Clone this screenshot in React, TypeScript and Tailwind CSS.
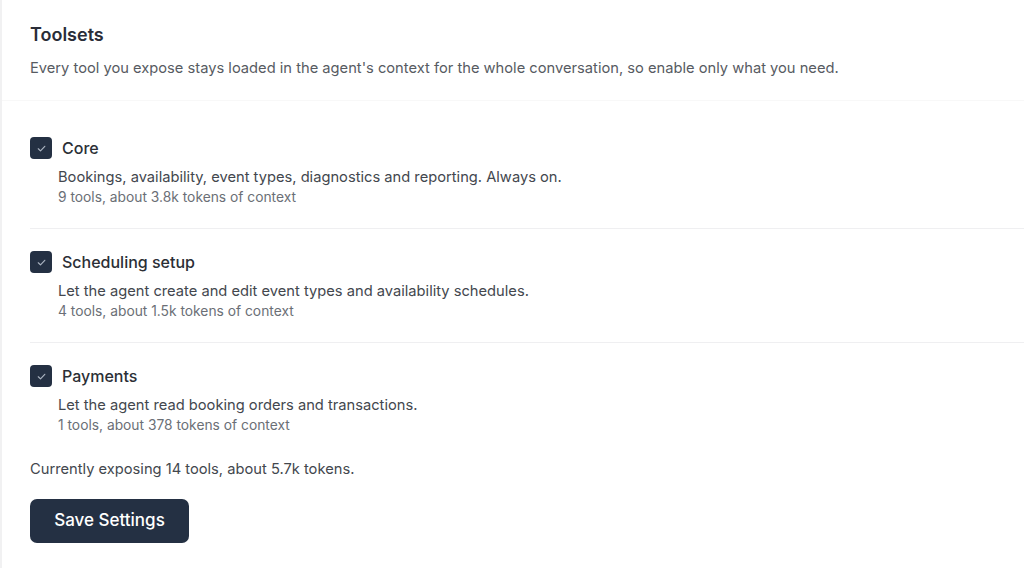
const toolsets = [
  {
    name: "Core",
    description:
      "Bookings, availability, event types, diagnostics and reporting. Always on.",
    meta: "9 tools, about 3.8k tokens of context",
  },
  {
    name: "Scheduling setup",
    description:
      "Let the agent create and edit event types and availability schedules.",
    meta: "4 tools, about 1.5k tokens of context",
  },
  {
    name: "Payments",
    description: "Let the agent read booking orders and transactions.",
    meta: "1 tools, about 378 tokens of context",
  },
];

function CheckBox() {
  return (
    <span className="flex h-[22px] w-[22px] shrink-0 items-center justify-center rounded-[4px] bg-[#243043]">
      <svg viewBox="0 0 12 12" className="h-[11px] w-[11px]" fill="none">
        <path
          d="M2.5 6.3 4.9 8.6 9.6 3.6"
          stroke="#aab3c0"
          strokeWidth="1.3"
          strokeLinecap="round"
          strokeLinejoin="round"
        />
      </svg>
    </span>
  );
}

export default function App() {
  return (
    <div
      className="min-h-screen w-full bg-white border-l-2 border-[#f1f1f2]"
      style={{ fontFamily: "Inter, 'Noto Sans', sans-serif" }}
    >
      <div className="pl-[28px]">
        <div className="pt-[23px] pb-[22px] border-b border-[#f8f8f8] -ml-[28px] pl-[28px]">
          <h1 className="text-[18px] leading-6 font-semibold text-[#2a2d38]">
            Toolsets
          </h1>
          <p className="mt-[11px] text-[14.7px] leading-5 text-[#575b62]">
            Every tool you expose stays loaded in the agent's context for the
            whole conversation, so enable only what you need.
          </p>
        </div>

        <div className="pt-[14px]">
          {toolsets.map((t, i) => (
            <div
              key={t.name}
              className={`pt-[22px] ${
                i < toolsets.length - 1
                  ? "pb-[21px] border-b border-[#efeff1]"
                  : "pb-[24px]"
              }`}
            >
              <label className="flex items-center gap-[10px]">
                <CheckBox />
                <span className="text-[16px] leading-[22px] font-medium text-[#2b2f36]">
                  {t.name}
                </span>
              </label>
              <div className="pl-[28px] mt-2">
                <p className="text-[14.7px] leading-5 text-[#43474e]">
                  {t.description}
                </p>
                <p className="text-[13.8px] leading-5 text-[#6b6f76]">
                  {t.meta}
                </p>
              </div>
            </div>
          ))}
        </div>

        <p className="text-[14.7px] leading-5 text-[#43474e]">
          Currently exposing 14 tools, about 5.7k tokens.
        </p>

        <button className="mt-[20px] h-[44px] w-[159px] rounded-[7px] bg-[#243043] text-[17px] font-medium text-white">
          Save Settings
        </button>
      </div>
    </div>
  );
}
